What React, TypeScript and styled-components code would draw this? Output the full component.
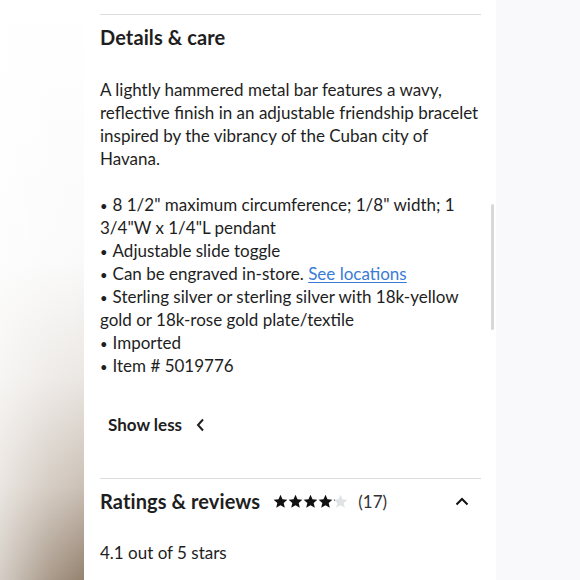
import styled, { createGlobalStyle } from 'styled-components';

const GlobalStyle = createGlobalStyle`
  html, body {
    margin: 0;
    padding: 0;
    background: #fff;
  }
  body {
    font-family: Lato, 'Open Sans', sans-serif;
    color: #1e1e1e;
  }
`;

const SPage = styled.div`
  display: flex;
  width: 580px;
  height: 580px;
  overflow: hidden;
`;

const SLeftEdge = styled.div`
  width: 84px;
  flex-shrink: 0;
  background:
    linear-gradient(to right, rgba(255, 255, 255, 0.6) 0%, rgba(255, 255, 255, 0.2) 60%, rgba(255, 255, 255, 0) 100%),
    linear-gradient(to bottom, #ffffff 0%, #fafafa 45%, #ebe7e3 65%, #cbc0b5 84%, #95826f 100%);
`;

const SRightEdge = styled.div`
  flex: 1;
  background: #f9f9fb;
`;

const SPanel = styled.div`
  position: relative;
  width: 412px;
  flex-shrink: 0;
  background: #fff;
  padding: 14px 15px 0 16px;
  box-sizing: border-box;
`;

const SDivider = styled.hr`
  border: none;
  border-top: 1px solid #dcdcdc;
  margin: 0;
`;

const SSectionTitle = styled.h2`
  margin: 0;
  font-size: 20px;
  font-weight: 700;
  line-height: 26px;
  letter-spacing: 0.1px;
`;

const SDetailsHead = styled.div`
  padding: 9px 0 0;
`;

const SBody = styled.div`
  margin-top: 28px;
  font-size: 17px;
  line-height: 23px;
`;

const SPara = styled.p`
  margin: 0 0 23px;
`;

const SList = styled.ul`
  list-style: none;
  margin: 0;
  padding: 0;
`;

const SItem = styled.li`
  line-height: 23px;

  &::before {
    content: '•';
    font-size: 13px;
    line-height: 0;
    margin-right: 5px;
  }
`;

const SLink = styled.a`
  color: #3a7bd5;
  text-decoration: underline;
  text-underline-offset: 2px;
`;

const SShowLess = styled.button`
  display: flex;
  align-items: center;
  gap: 14px;
  margin: 37px 0 0 8px;
  padding: 0;
  border: none;
  background: none;
  font-family: inherit;
  font-size: 17px;
  font-weight: 700;
  color: #1e1e1e;
  line-height: 22px;
  cursor: pointer;
`;

const SSectionGap = styled.div`
  height: 42px;
`;

const SRatingsRow = styled.div`
  display: flex;
  align-items: center;
  padding: 9px 0 0;
  height: 26px;
`;

const SStars = styled.div`
  display: flex;
  margin-left: 13px;
`;

const SCount = styled.span`
  margin-left: 10px;
  font-size: 17px;
  color: #333;
`;

const SCaret = styled.span`
  margin-left: auto;
  margin-right: 12px;
  display: flex;
`;

const SSummary = styled.div`
  margin-top: 28px;
  font-size: 17px;
  line-height: 22px;
`;

const SScrollbar = styled.div`
  position: absolute;
  left: 407px;
  top: 204px;
  width: 3px;
  height: 126px;
  border-radius: 2px;
  background: #d8d8d8;
`;

function Star({ fill }: { fill: number }) {
  const id = `s${Math.round(fill * 100)}`;
  return (
    <svg width='15' height='15' viewBox='0 0 24 24'>
      <defs>
        <linearGradient id={id}>
          <stop offset={fill} stopColor='#111' />
          <stop offset={fill} stopColor='#dfe3e6' />
        </linearGradient>
      </defs>
      <path
        d='M12 1.2l3.2 7.2 7.8.7-5.9 5.2 1.8 7.7L12 18l-6.9 4 1.8-7.7-5.9-5.2 7.8-.7z'
        fill={`url(#${id})`}
      />
    </svg>
  );
}

const bullets: React.ReactNode[] = [
  '8 1/2" maximum circumference; 1/8" width; 1 3/4"W x 1/4"L pendant',
  'Adjustable slide toggle',
  <>
    Can be engraved in-store. <SLink href='#'>See locations</SLink>
  </>,
  'Sterling silver or sterling silver with 18k-yellow gold or 18k-rose gold plate/textile',
  'Imported',
  'Item # 5019776',
];

export default function App() {
  return (
    <SPage>
      <GlobalStyle />
      <SLeftEdge />
      <SPanel>
        <SDivider />
        <SDetailsHead>
          <SSectionTitle>Details &amp; care</SSectionTitle>
        </SDetailsHead>
        <SBody>
          <SPara>
            A lightly hammered metal bar features a wavy, reflective finish in an adjustable friendship bracelet
            inspired by the vibrancy of the Cuban city of Havana.
          </SPara>
          <SList>
            {bullets.map((b, i) => (
              <SItem key={i}>{b}</SItem>
            ))}
          </SList>
        </SBody>
        <SShowLess>
          Show less
          <svg width='9' height='14' viewBox='0 0 9 14'>
            <path d='M7 1.5L2 7l5 5.5' fill='none' stroke='#1e1e1e' strokeWidth='2' />
          </svg>
        </SShowLess>
        <SSectionGap />
        <SDivider />
        <SRatingsRow>
          <SSectionTitle>Ratings &amp; reviews</SSectionTitle>
          <SStars>
            {[1, 1, 1, 1, 0.1].map((f, i) => (
              <Star key={i} fill={f} />
            ))}
          </SStars>
          <SCount>(17)</SCount>
          <SCaret>
            <svg width='14' height='9' viewBox='0 0 14 9'>
              <path d='M1.5 7.5L7 2l5.5 5.5' fill='none' stroke='#111' strokeWidth='2' />
            </svg>
          </SCaret>
        </SRatingsRow>
        <SSummary>4.1 out of 5 stars</SSummary>
        <SScrollbar />
      </SPanel>
      <SRightEdge />
    </SPage>
  );
}
